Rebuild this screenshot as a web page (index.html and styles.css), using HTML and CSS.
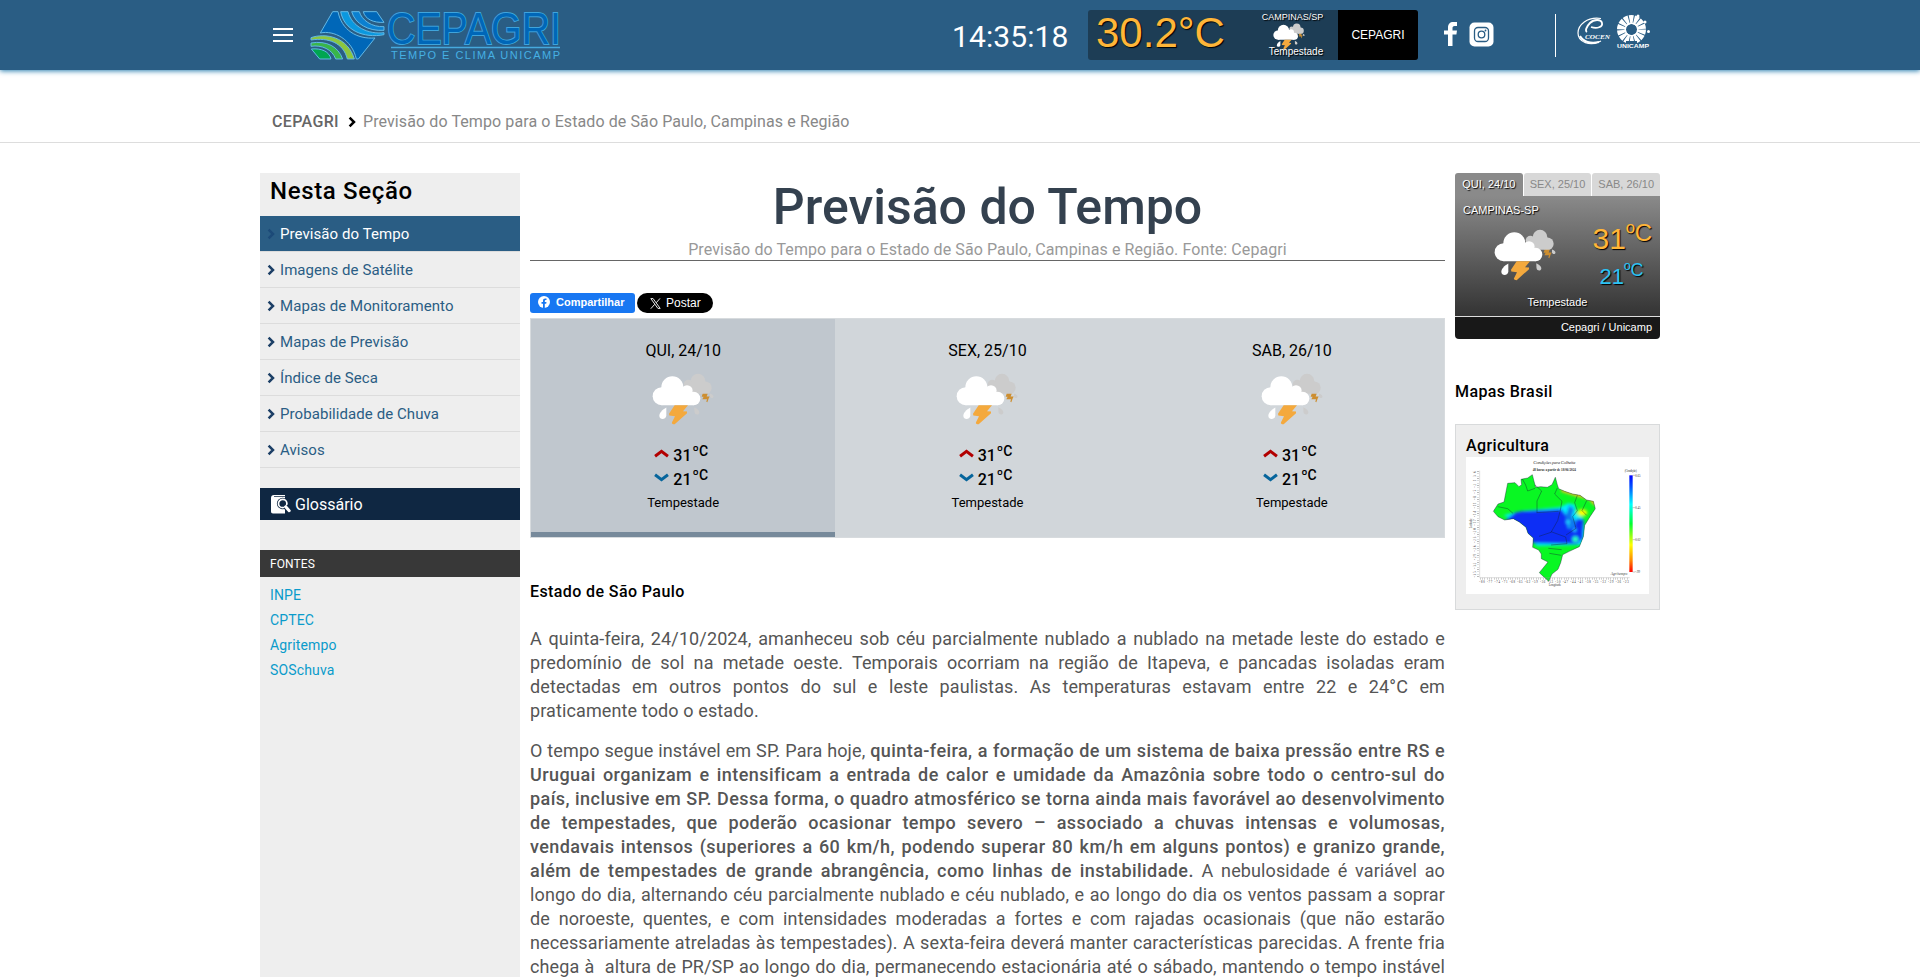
FILE: index.html
```
<!DOCTYPE html>
<html lang="pt-br">
<head>
<meta charset="utf-8">
<title>Previsão do Tempo - CEPAGRI</title>
<link rel="stylesheet" href="styles.css">
</head>
<body>
<svg class="defs" width="0" height="0">
  <symbol id="storm" viewBox="395 189 186 155">
    <g fill="#ccc"><circle cx="533" cy="213" r="22"/><circle cx="555" cy="233" r="19"/><circle cx="504" cy="223" r="14"/><path d="M500 215h55v36h-45z"/><path d="M522 291c10 5 15 10 15 15 0 9-12 9-14 2-1-5-1-10-1-17z"/><path d="M569 250c8 3 12 7 10 11-4 5-9 2-10-2z"/></g>
    <path fill="#cd8e30" d="M547 251h15l-3 8h9l-3 6-4 11-3-1 2-8h-14l4-7h-6z"/>
    <g fill="#fff"><circle cx="424" cy="258" r="27"/><circle cx="456" cy="231" r="33"/><circle cx="500" cy="242" r="17"/><circle cx="520" cy="265" r="20"/><path d="M424 240l90 2 6 43h-96z"/><path d="M438 292c-12 7-21 16-21 25 0 12 18 14 21 0z"/></g>
    <path fill="#f4a93d" d="M463 285h40l-15 18 12 1v5l-37 33q-10 0-8-6l9-18-17-2-1-5z"/>
  </symbol>
  <symbol id="chev" viewBox="0 0 8 12"><path d="M1.6 1.6L6 6l-4.4 4.4" fill="none" stroke="currentColor" stroke-width="2.5"/></symbol>
</svg>

<header class="topbar">
  <div class="container topbar-row">
    <span class="burger"><i></i><i></i><i></i></span>
    <svg class="logo" width="250" height="50" viewBox="0 0 250 50">
      <g transform="scale(.3333) translate(-183 -33)" stroke="#62b9e6" stroke-width="3">
        <path fill="#0067b8" d="M248 35L264 35C275 90 320 118 375 114L325 177H319C306 118 252 90 211 99Z"/>
        <path fill="#0a98df" d="M272 35H294C305 80 355 104 402 98V104C340 116 282 90 272 35Z"/>
        <path fill="#0b80d0" d="M305 35H328C335 60 365 82 402 80V91C355 94 316 72 305 35Z"/>
        <path fill="#0067b8" d="M340 35H380L402 67C370 69 345 57 340 35Z"/>
        <path fill="#8cc63f" d="M183 113C225 98 294 110 313 177H292C280 128 235 112 183 120Z"/>
        <path fill="#39b54a" d="M183 129C230 121 265 140 278 177H257C247 148 215 134 183 139Z"/>
        <path fill="#00a551" d="M184 147C215 144 238 155 243 177H209Z"/>
      </g>
      <text class="logo-name" x="76" y="32.500" textLength="174" lengthAdjust="spacingAndGlyphs">CEPAGRI</text>
      <path d="M80 36.500H249" stroke="#46a9dd" stroke-width="1.300"/>
      <text class="logo-sub" x="80" y="48" textLength="169">TEMPO E CLIMA UNICAMP</text>
    </svg>
    <span class="clock">14:35:18</span>
    <div class="now">
      <span class="now-temp">30.2°C</span>
      <div class="now-city"><span class="now-place">CAMPINAS/SP</span><svg class="now-icon"><use href="#storm"/></svg><span class="now-desc">Tempestade</span></div>
      <span class="now-src">CEPAGRI</span>
    </div>
    <div class="social">
      <svg width="13" height="24" viewBox="0 0 13 24"><path fill="#fff" d="M4 24V12.500H0V8.500h4V5.500C4 2 6 0 9.200 0H13v4h-2.400C9.300 4 8.500 4.700 8.500 6v2.500H13l-.6 4H8.500V24z"/></svg>
      <svg width="25" height="25" viewBox="0 0 25 25"><rect x=".5" y=".5" width="24" height="24" rx="5" fill="#fff"/><g fill="none" stroke="#2a5d84" stroke-width="1.300"><rect x="5.500" y="5.500" width="14" height="14" rx="3.500"/><circle cx="12.500" cy="12.500" r="3.300"/></g><circle cx="16.500" cy="8.500" r=".9" fill="#2a5d84"/></svg>
    </div>
    <div class="partners">
      <svg width="35" height="30" viewBox="0 0 35 30"><g fill="none" stroke="#fff"><path d="M24 1.500C10-.5 1 8 1 16c0 9 12 14 23 8" stroke-width="1.200"/><path d="M3 19c3 6 11 8 19 6" stroke-width="2"/><path d="M14 10c6 2 12 0 11-4-1-4-8-4-12 0-4 4-5 8-3 9" stroke-width="1.800"/></g><text class="cocen" x="8" y="21.500" textLength="25" lengthAdjust="spacingAndGlyphs">COCEN</text></svg>
      <svg width="35" height="36" viewBox="0 0 35 36"><circle cx="15.500" cy="15.500" r="10" fill="none" stroke="#fff" stroke-width="9" stroke-dasharray="3.700 .78"/><circle cx="15.500" cy="15.500" r="6.300" fill="none" stroke="#fff" stroke-width="1.500"/><g fill="#fff"><circle cx="22" cy="2" r="1.500"/><circle cx="29" cy="8" r="1.500"/><circle cx="32.500" cy="17.500" r="1.500"/></g><path fill="#2a5d84" d="M10 27h11v3H10z"/><text class="unicamp" x="1" y="33.500" textLength="32" lengthAdjust="spacingAndGlyphs">UNICAMP</text></svg>
    </div>
  </div>
</header>

<nav class="crumbs"><div class="container crumbs-row"><span class="crumb-home">CEPAGRI</span><svg class="crumb-chev"><use href="#chev"/></svg><span>Previsão do Tempo para o Estado de São Paulo, Campinas e Região</span></div></nav>

<div class="container page">
  <aside class="side">
    <h2>Nesta Seção</h2>
    <ul class="menu">
      <li class="on"><svg><use href="#chev"/></svg>Previsão do Tempo</li>
      <li><svg><use href="#chev"/></svg>Imagens de Satélite</li>
      <li><svg><use href="#chev"/></svg>Mapas de Monitoramento</li>
      <li><svg><use href="#chev"/></svg>Mapas de Previsão</li>
      <li><svg><use href="#chev"/></svg>Índice de Seca</li>
      <li><svg><use href="#chev"/></svg>Probabilidade de Chuva</li>
      <li><svg><use href="#chev"/></svg>Avisos</li>
    </ul>
    <div class="glossary"><svg width="20" height="19" viewBox="0 0 20 19"><path fill="#fff" d="M0 3C0 1 1 0 3 0h11v1.200H3V2h11v16.500H2c-1.300 0-2-.7-2-2z"/><circle cx="11.700" cy="8.500" r="5.800" fill="#0f2742"/><circle cx="11.700" cy="8.500" r="4.200" fill="#0f2742" stroke="#fff" stroke-width="1.700"/><path d="M14.500 11.500l4 4.500" stroke="#0f2742" stroke-width="5"/><path d="M14.700 11.800l3.500 3.900" stroke="#fff" stroke-width="3" stroke-linecap="round"/></svg>Glossário</div>
    <div class="sources-head">FONTES</div>
    <ul class="sources"><li>INPE</li><li>CPTEC</li><li>Agritempo</li><li>SOSchuva</li></ul>
  </aside>

  <main class="main">
    <h1>Previsão do Tempo</h1>
    <p class="lead">Previsão do Tempo para o Estado de São Paulo, Campinas e Região. Fonte: Cepagri</p>
    <div class="share">
      <span class="fb"><svg width="12" height="12" viewBox="0 0 12 12"><circle cx="6" cy="6" r="6" fill="#fff"/><path fill="#1877f2" d="M5 12V7.800H3.500V6H5V4.800C5 3.200 5.900 2.400 7.200 2.400l1.300.1V4h-.8c-.6 0-.9.4-.9.900V6h1.700l-.3 1.800H6.800V12z"/></svg>Compartilhar</span>
      <span class="xb"><svg width="11" height="11" viewBox="0 0 11 11"><path d="M.8.600h2.300L10.200 10.400H7.900zM10 .4L6.200 4.800M4.700 6.300L.8 10.700" fill="none" stroke="#fff" stroke-width=".9"/></svg>Postar</span>
    </div>
    <div class="days">
      <section class="day today"><span class="day-name">QUI, 24/10</span><svg class="day-icon"><use href="#storm"/></svg><span class="t"><svg class="up" viewBox="0 0 14 8"><path d="M1 6.500L7 2l6 4.500"/></svg>31<sup>ºC</sup></span><span class="t"><svg class="down" viewBox="0 0 14 8"><path d="M1 1.500L7 6l6-4.500"/></svg>21<sup>ºC</sup></span><span class="day-desc">Tempestade</span></section>
      <section class="day"><span class="day-name">SEX, 25/10</span><svg class="day-icon"><use href="#storm"/></svg><span class="t"><svg class="up" viewBox="0 0 14 8"><path d="M1 6.500L7 2l6 4.500"/></svg>31<sup>ºC</sup></span><span class="t"><svg class="down" viewBox="0 0 14 8"><path d="M1 1.500L7 6l6-4.500"/></svg>21<sup>ºC</sup></span><span class="day-desc">Tempestade</span></section>
      <section class="day"><span class="day-name">SAB, 26/10</span><svg class="day-icon"><use href="#storm"/></svg><span class="t"><svg class="up" viewBox="0 0 14 8"><path d="M1 6.500L7 2l6 4.500"/></svg>31<sup>ºC</sup></span><span class="t"><svg class="down" viewBox="0 0 14 8"><path d="M1 1.500L7 6l6-4.500"/></svg>21<sup>ºC</sup></span><span class="day-desc">Tempestade</span></section>
    </div>
    <h4>Estado de São Paulo</h4>
    <p class="text">A quinta-feira, 24/10/2024, amanheceu sob céu parcialmente nublado a nublado na metade leste do estado e predomínio de sol na metade oeste. Temporais ocorriam na região de Itapeva, e pancadas isoladas eram detectadas em outros pontos do sul e leste paulistas. As temperaturas estavam entre 22 e 24°C em praticamente todo o estado.</p>
    <p class="text full">O tempo segue instável em SP. Para hoje, <strong>quinta-feira, a formação de um sistema de baixa pressão entre RS e Uruguai organizam e intensificam a entrada de calor e umidade da Amazônia sobre todo o centro-sul do país, inclusive em SP. Dessa forma, o quadro atmosférico se torna ainda mais favorável ao desenvolvimento de tempestades, que poderão ocasionar tempo severo – associado a chuvas intensas e volumosas, vendavais intensos (superiores a 60 km/h, podendo superar 80 km/h em alguns pontos) e granizo grande, além de tempestades de grande abrangência, como linhas de instabilidade.</strong> A nebulosidade é variável ao longo do dia, alternando céu parcialmente nublado e céu nublado, e ao longo do dia os ventos passam a soprar de noroeste, quentes, e com intensidades moderadas a fortes e com rajadas ocasionais (que não estarão necessariamente atreladas às tempestades). A sexta-feira deverá manter características parecidas. A frente fria chega à&nbsp; altura de PR/SP ao longo do dia, permanecendo estacionária até o sábado, mantendo o tempo instável</p>
  </main>

  <aside class="right">
    <div class="tabs"><span class="tab sel">QUI, 24/10</span><span class="tab">SEX, 25/10</span><span class="tab">SAB, 26/10</span></div>
    <div class="wbody">
      <span class="wcity">CAMPINAS-SP</span>
      <div class="wrow"><svg class="wicon"><use href="#storm"/></svg><div class="wtemps"><span class="hi">31<sup>ºC</sup></span><span class="lo">21<sup>ºC</sup></span></div></div>
      <span class="wdesc">Tempestade</span>
    </div>
    <div class="wfoot">Cepagri / Unicamp</div>
    <h4 class="maps-title">Mapas Brasil</h4>
    <div class="card">
      <h4>Agricultura</h4>
      <svg class="map" width="183" height="137" viewBox="78 141 549 411">
        <defs>
          <path id="brp" d="M203 220l22-2 12 12 8-6-2-16 20-4 14-10 5 20 5 18 15-2 20 2 14-8 10-22 6 22 4 12 18 8 24 8 22 4 20 14 20 4 6 22-16 24-16 26-4 34-12 30-30 14-20 10-6 24-8 20-18 14-10 22-28-26 26-32-20-10 0-14-8-12-18-8 2-28-16-14-6-18-20-16-18-10-26 4-20-10-14-16 14-22 18-6z"/>
          <clipPath id="br"><use href="#brp"/></clipPath>
          <filter id="soft" x="-20%" y="-20%" width="140%" height="140%"><feGaussianBlur stdDeviation="4"/></filter>
          <linearGradient id="scale" x1="0" y1="0" x2="0" y2="1"><stop offset="0" stop-color="#00f"/><stop offset=".12" stop-color="#05f"/><stop offset=".3" stop-color="#0ff"/><stop offset=".5" stop-color="#0f3"/><stop offset=".72" stop-color="#ff0"/><stop offset=".88" stop-color="#f80"/><stop offset="1" stop-color="#f00"/></linearGradient>
        </defs>
        <path fill="#fff" d="M78 141h549v411H78z"/>
        <g clip-path="url(#br)">
          <path fill="#09f723" d="M78 141h549v411H78z"/>
          <g filter="url(#soft)">
            <path d="M190 316l60-14 110-10 25-12 20 4 5 30 20 10 6 50-8 30-138 4-24-30-50-50z" fill="#0ef"/>
            <path d="M225 308l20-4 120-6 12 16 8 40 16-4 10-24 20 2-2 58-18 16-130-2-44-30-40-40z" fill="#0c2df5"/>
            <path d="M376 320l12-34 14 10-6 24 12 14-16 26z" fill="#1173ee"/>
            <path d="M365 238l45 14 40 10 18 20" fill="none" stroke="#fb2" stroke-width="14"/>
            <ellipse cx="427" cy="308" rx="15" ry="10" fill="#ff0"/>
            <circle cx="406" cy="388" r="9" fill="#2fb"/><circle cx="384" cy="336" r="6" fill="#2df"/><circle cx="404" cy="360" r="5" fill="#2df"/>
          </g>
        </g>
        <g fill="none" stroke="#123" stroke-width="1.200"><use href="#brp"/><path d="M247 207l10 18 6 18 22-8M285 225l20 18-14 30v35M173 290l30 6 16 14M352 234l-8 18 22 22-5 26-8 32-20 35-36 12M412 256l-8 22 8 24-14 18M440 272l-14 30 14 14M290 308l66-4M333 365l44 16 4 20-48 4M398 320l10 35-30 20M328 430l36 6M325 415l40 4"/></g>
        <path d="M119 182v320M119 503h450" stroke="#999"/><path d="M114 184v318" stroke="#777" stroke-width="6" stroke-dasharray="1 6"/><path d="M120 506h446" stroke="#777" stroke-width="6" stroke-dasharray="1 6"/>
        <path fill="url(#scale)" d="M568 196h10v290h-10z"/><path d="M578 196h8M578 293h8M578 389h8M578 486h8" stroke="#555"/>
        <g class="map-t"><text x="280" y="162" font-size="14" font-style="italic" textLength="126">Condições para Colheita</text><text x="278" y="182" font-size="10" font-weight="bold" textLength="130">48 horas a partir de 18/06/2024</text><text x="554" y="185" font-size="9" textLength="36">(Condição)</text><text x="512" y="495" font-size="11" font-style="italic" textLength="50">Agritempo</text><text x="326" y="529" font-size="9">Longitude</text><text x="96" y="355" font-size="9" transform="rotate(-90 96 355)">Latitude</text><text x="586" y="200" font-size="9">0.65</text><text x="586" y="297" font-size="9">0.45</text><text x="586" y="393" font-size="9">0.02</text><text x="586" y="489" font-size="9">-.99</text><text x="118" y="518" font-size="9" textLength="448">-80 -77 -74 -71 -68 -65 -62 -59 -56 -53 -50 -47 -44 -41 -38 -35 -32 -29 -26 -23</text><text x="107" y="502" font-size="9" textLength="318" transform="rotate(-90 107 502)">-35 -32 -29 -26 -23 -20 -17 -14 -11 -8 -5 -2 1 3 6</text></g>
      </svg>
    </div>
  </aside>
</div>
</body>
</html>
```
FILE: styles.css
```
* { box-sizing: border-box; }
body { margin: 0; height: 977px; overflow: hidden; background: #fff; font-family: Roboto, sans-serif; color: #000; }
h1, h2, h4, p, ul { margin: 0; padding: 0; font-weight: 500; }
ul { list-style: none; font-weight: 400; }
.defs { display: block; }
.container { width: 1400px; margin: 0 auto; }

.topbar { height: 70px; background: #2a5d84; box-shadow: 0 1px 5px #2a7fb0; }
.topbar-row { display: flex; align-items: flex-start; height: 70px; }
.burger { display: flex; flex-direction: column; gap: 4px; margin: 28px 18px 0 13px; width: 20px; }
.burger i { height: 2px; background: #fff; }
.logo { margin-top: 11px; flex: none; overflow: visible; }
.logo-name { font: 45px "Liberation Sans", sans-serif; fill: #0067b8; stroke: #3fa4dc; stroke-width: 1.8px; paint-order: stroke; }
.logo-sub { font: 11px "Liberation Sans", sans-serif; fill: #46b0e3; }
.clock { margin: 19px 0 0 391px; width: 136px; font-size: 30px; line-height: 36px; letter-spacing: .1px; color: #fff; }
.now { display: flex; width: 330px; height: 50px; margin-top: 10px; border-radius: 3px; overflow: hidden; background: #1d3d55; font-family: "Liberation Sans", sans-serif; color: #fff; text-shadow: 1px 1px 1px #000; flex: none; }
.now-temp { width: 166px; padding-left: 8px; font-size: 42px; line-height: 45px; color: #ffb639; }
.now-city { width: 84px; display: flex; flex-direction: column; align-items: center; text-align: center; padding-top: 2px; }
.now-place { font-size: 9px; line-height: 11px; padding-right: 7px; }
.now-icon { width: 32px; height: 27px; margin-right: 14px; }
.now-desc { font-size: 10px; line-height: 12px; margin-top: -4px; }
.now-src { width: 80px; background: #000; font-size: 12px; line-height: 50px; text-align: center; }
.social { display: flex; gap: 12px; margin: 22px 0 0 26px; width: 111px; }
.partners { display: flex; gap: 4px; height: 43px; margin-top: 14px; border-left: 1px solid #fff; padding-left: 21px; }
.partners svg:first-child { margin-top: 3px; }
.cocen { font: italic bold 7px "Liberation Serif", serif; fill: #fff; }
.unicamp { font: bold 5.5px "Liberation Sans", sans-serif; fill: #fff; }

.crumbs { height: 73px; border-bottom: 1px solid #ddd; }
.crumbs-row { display: flex; padding: 40px 0 0 12px; font-size: 16px; line-height: 24px; letter-spacing: .1px; color: #888; }
.crumb-home { color: #666; font-weight: 500; letter-spacing: .35px; }
.crumb-chev { width: 8px; height: 12px; margin: 6px 7px 0 9px; color: #000; }

.page { display: flex; gap: 10px; padding-top: 30px; }
.side { width: 260px; height: 830px; background: #eee; }
.side h2 { height: 43px; padding-left: 10px; font-size: 24px; line-height: 36px; letter-spacing: .65px; }
.menu li { display: flex; align-items: center; height: 36px; border-bottom: 1px solid #dcdcdc; padding-left: 7px; font-size: 15px; letter-spacing: .07px; color: #2a5d84; }
.menu svg { width: 8px; height: 12px; margin-right: 5px; color: #1c3f66; }
.menu .on { color: #fff; background: #2a5d84; }
.menu .on svg { color: #1c4a78; }
.glossary { display: flex; align-items: center; gap: 4px; height: 32px; margin-top: 20px; padding-left: 11px; background: #0f2742; color: #fff; font-size: 16px; }
.sources-head { height: 27px; margin-top: 30px; padding-left: 10px; background: #383838; color: #fff; font-size: 12px; line-height: 28px; letter-spacing: .1px; }
.sources { padding: 6px 0 0 10px; font-size: 14px; line-height: 25px; letter-spacing: .15px; color: #0a9bcb; }

.main { width: 915px; }
.main h1 { height: 67px; font-size: 50px; line-height: 69px; text-align: center; color: #34414f; }
.lead { height: 21px; font-size: 16px; line-height: 20px; letter-spacing: .09px; border-bottom: 1px solid #666; color: #999; font-weight: 400; text-align: center; }
.share { display: flex; gap: 2px; margin: 32px 0 5px; height: 20px; color: #fff; font-family: "Liberation Sans", sans-serif; }
.share span { display: flex; align-items: center; height: 20px; }
.fb { width: 105px; gap: 6px; padding: 0 0 2px 8px; border-radius: 3px; background: #1877f2; font-size: 11px; font-weight: bold; }
.xb { width: 76px; gap: 5px; padding-left: 13px; border-radius: 10px; background: #000; font-size: 12px; }
.days { display: grid; grid-template-columns: repeat(3, 1fr); height: 220px; border: 1px solid #d7dbde; background: #d1d6da; }
.day { display: flex; flex-direction: column; align-items: center; padding-top: 20px; }
.today { background: #c0c7ce; border-bottom: 5px solid #778a9b; }
.day-name { font-size: 16px; line-height: 24px; }
.day-icon { width: 62px; height: 52px; margin: 10px 0 16px; }
.t { display: flex; align-items: baseline; height: 24px; font-size: 16px; font-weight: 500; line-height: 29px; margin-right: 4px; }
.t svg { width: 15px; height: 9px; margin-right: 4px; fill: none; stroke-width: 2.8; align-self: center; }
.t sup { font-size: 14px; line-height: 10px; position: relative; top: -5px; margin-left: 1px; }
.up { stroke: #b20000; }
.down { stroke: #06659c; }
.day-desc { font-size: 13px; line-height: 28px; }
.main h4 { margin: 42px 0 23px; font-size: 16px; line-height: 24px; letter-spacing: .4px; }
.text { margin-bottom: 16px; font-size: 18px; line-height: 24px; font-weight: 400; letter-spacing: .12px; text-align: justify; color: #555; }
.text strong { font-weight: 500; letter-spacing: .43px; }
.full { text-align-last: justify; }

.right { width: 205px; font-family: "Liberation Sans", sans-serif; }
.tabs { display: flex; gap: 1px; height: 23px; }
.tab { flex: 1; background: #d8d8d8; border-radius: 3px 3px 0 0; text-align: center; font-size: 11px; line-height: 23px; color: #888; }
.sel { background: #8a8a8a; color: #fff; text-shadow: 1px 1px 1px #000; }
.wbody { display: flex; flex-direction: column; height: 120px; background: linear-gradient(#8a8a8a, #333); color: #fff; text-shadow: 1px 1px 1px #000; font-size: 11px; }
.wcity { padding: 7px 0 0 8px; line-height: 14px; }
.wrow { display: flex; height: 77px; padding: 12px 8px 0 39px; justify-content: space-between; }
.wicon { width: 62px; height: 52px; }
.wtemps { display: flex; flex-direction: column; margin-top: -11px; }
.wtemps sup { line-height: 0; position: relative; vertical-align: baseline; }
.hi { font-size: 30px; line-height: 42px; color: #ffb639; }
.hi sup { font-size: 24px; top: -8px; }
.lo { font-size: 22px; line-height: 33px; padding-left: 7px; color: #2cc3f5; }
.lo sup { font-size: 18px; top: -8px; }
.wdesc { text-align: center; line-height: 14px; margin-top: 1px; }
.wfoot { height: 23px; border-top: 1px solid #ddd; border-radius: 0 0 4px 4px; background: #181818; color: #fff; font-size: 11px; line-height: 21px; text-align: right; padding-right: 8px; }
.right h4 { font-family: Roboto, sans-serif; font-size: 16px; line-height: 24px; letter-spacing: .4px; }
.maps-title { margin: 41px 0 20px; }
.card { height: 186px; padding: 9px 10px; background: #eee; border: 1px solid #d8dadb; }
.card h4 { height: 23px; }
.map { display: block; }
.map-t { font-family: "Liberation Serif", serif; fill: #333; }
```
